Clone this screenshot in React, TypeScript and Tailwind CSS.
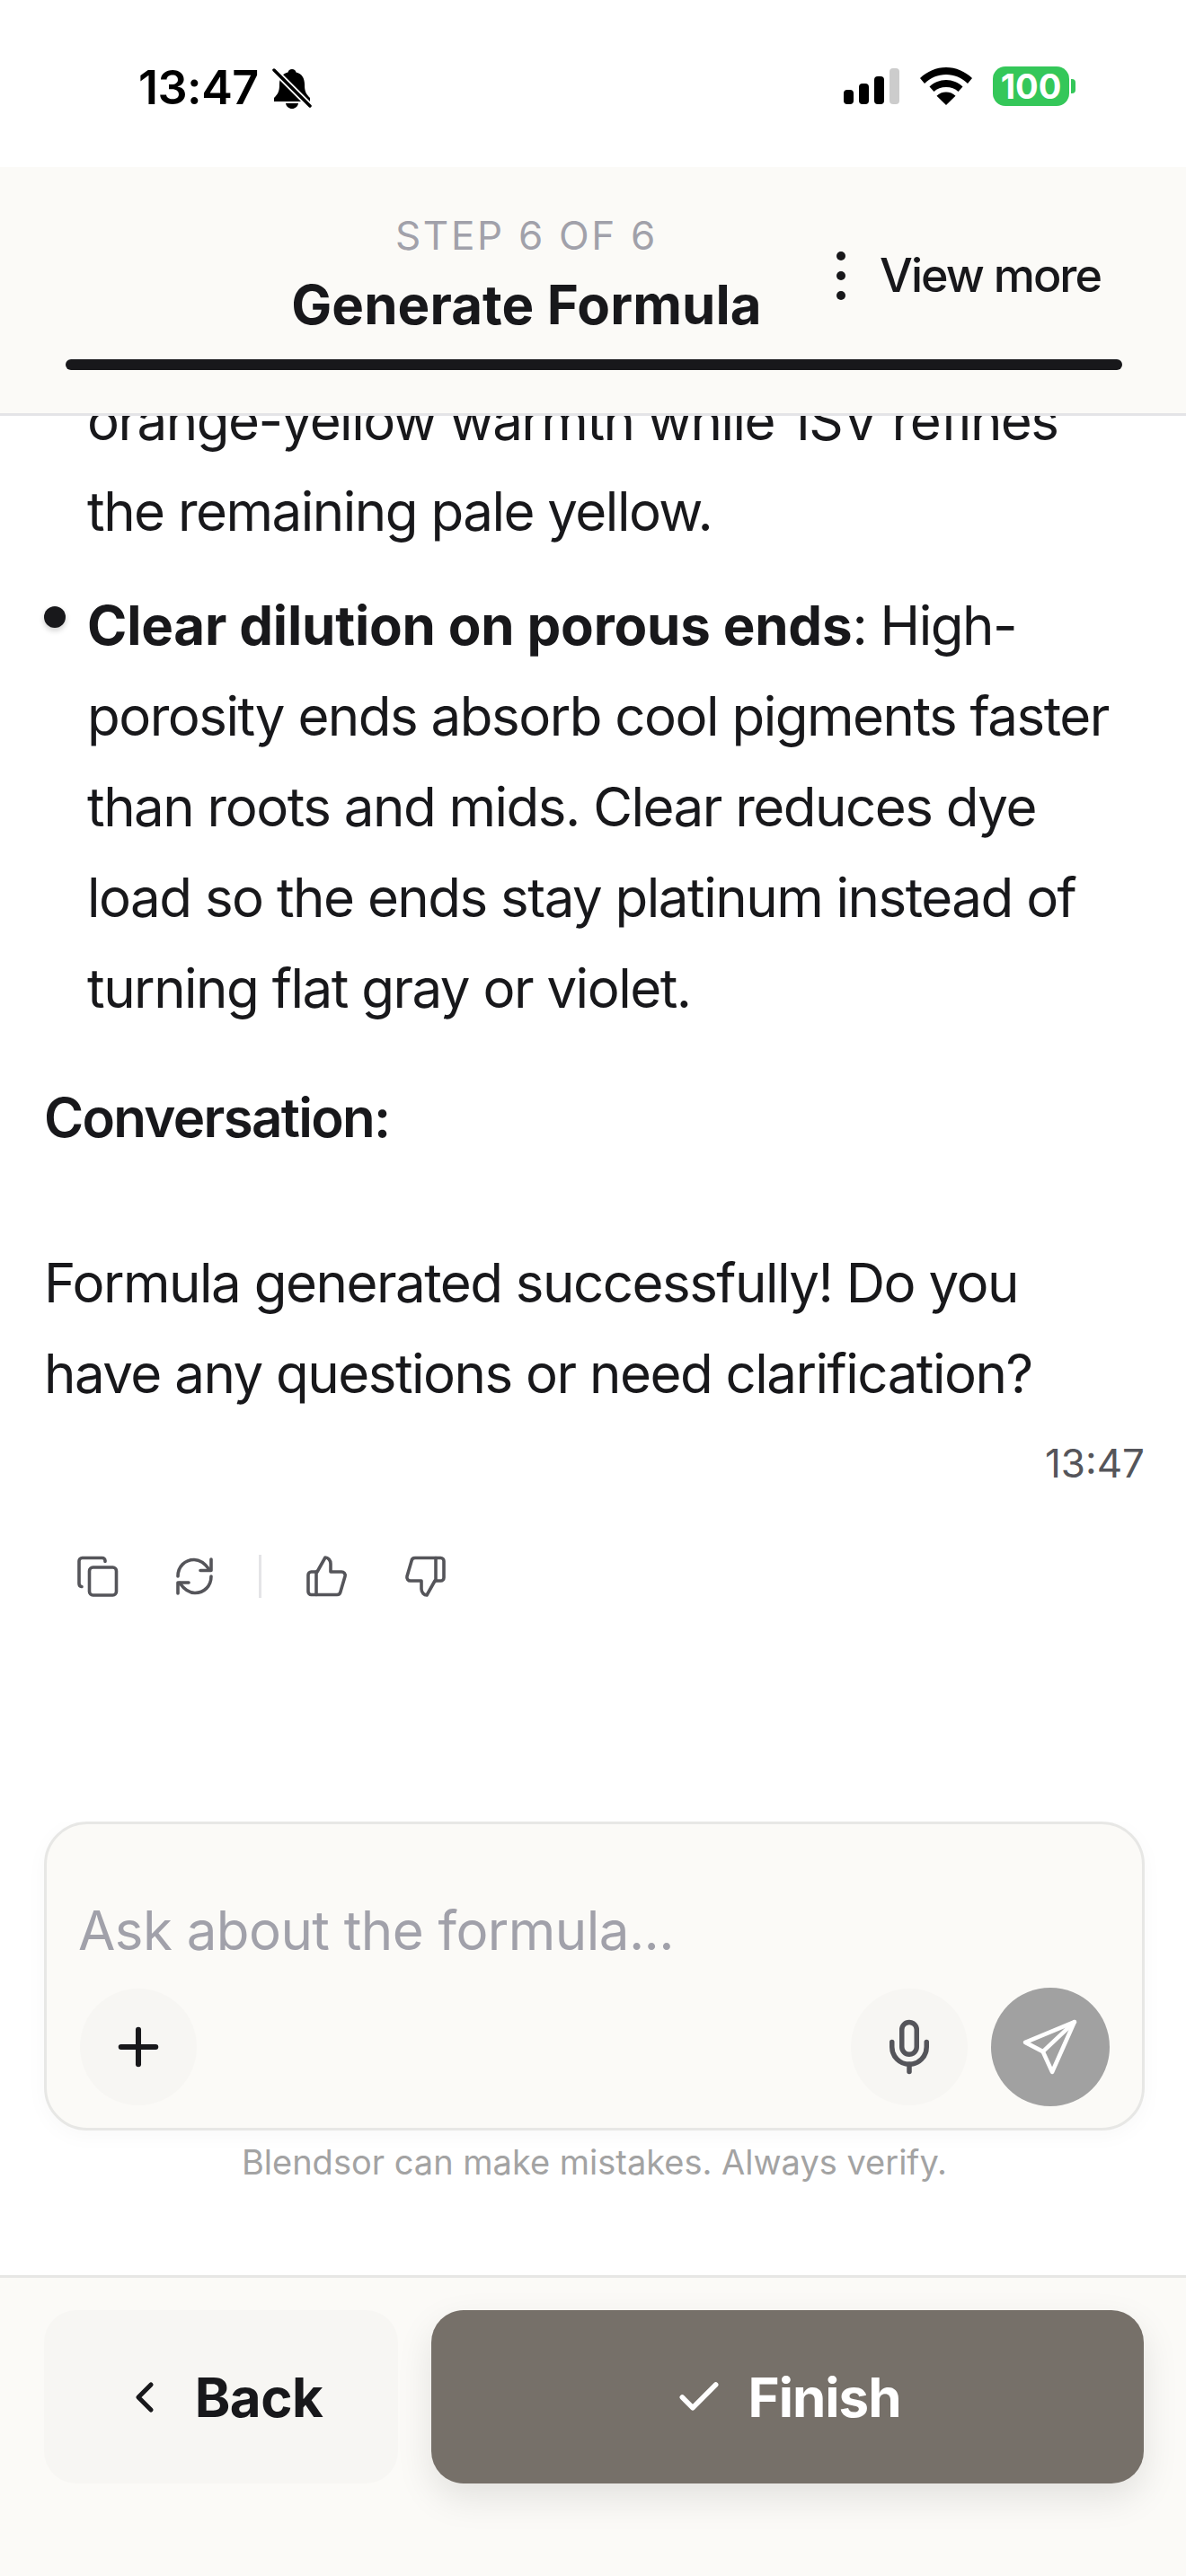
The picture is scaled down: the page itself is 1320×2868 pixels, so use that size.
import React from "react";
import { Plus, Mic, ChevronLeft, Check } from "lucide-react";

const Ink = "text-[#18181b]";

function CopyIcon() {
  return (
    <svg width="46" height="46" viewBox="0 0 46 46" fill="none" stroke="#55555a" strokeWidth="3.6" strokeLinecap="round" strokeLinejoin="round">
      <path d="M31 6.500V5.500a3.500 3.500 0 0 0-3.500-3H5.500A3.500 3.500 0 0 0 2 6v25a3.500 3.500 0 0 0 3 3.500" />
      <rect x="13.500" y="13" width="30" height="31" rx="4" />
    </svg>
  );
}
function RefreshIcon() {
  return (
    <svg width="42" height="42" viewBox="0 0 42 42" fill="none" stroke="#55555a" strokeWidth="3.6" strokeLinecap="round" strokeLinejoin="round">
      <path d="M2 21C2 10 10 2.500 20 2.500c7 0 12 4 17 11" />
      <path d="M39 2v12.500H27" />
      <path d="M39 21c0 11-8 18.500-18 18.500-7 0-12-4-17-11" />
      <path d="M2 40V28h12" />
    </svg>
  );
}
function ThumbUp() {
  return (
    <svg width="46" height="46" viewBox="0 0 46 46" fill="none" stroke="#55555a" strokeWidth="3.6" strokeLinecap="round" strokeLinejoin="round">
      <path d="M11 18H5.500A3.500 3.500 0 0 0 2 21.500v18.500A3.500 3.500 0 0 0 5.500 43.500H34a4 4 0 0 0 4-3.500l5-17a4 4 0 0 0-4-5H27V9c0-4-3-7-6-7L12 18" />
      <path d="M11 18v25.500" />
    </svg>
  );
}
function ThumbDown() {
  return (
    <svg width="46" height="46" viewBox="0 0 46 46" fill="none" stroke="#55555a" strokeWidth="3.6" strokeLinecap="round" strokeLinejoin="round">
      <path d="M35 28h5.500a3.500 3.500 0 0 0 3.500-3.500V6a3.500 3.500 0 0 0-3.500-3.500H12a4 4 0 0 0-4 3.500L3 23a4 4 0 0 0 4 5h12v9c0 4 3 7 6 7l9-16" />
      <path d="M35 28V2.500" />
    </svg>
  );
}
function SendIcon() {
  return (
    <svg width="64" height="64" viewBox="0 0 62 62" fill="none" stroke="#ffffff" strokeWidth="4.5" strokeLinecap="round" strokeLinejoin="round">
      <path d="M57 4 4 26l19 10 10 22L57 4Z" />
      <path d="M23 36 57 4" />
    </svg>
  );
}
function MuteBell() {
  return (
    <svg width="44" height="46" viewBox="0 0 44 46" fill="none">
      <path d="M22 2c2.500 0 4 1.500 4.500 3.500C33 7 36 12 36 19c0 7 1 10 6 15v4H2v-4c5-5 6-8 6-15C8 12 11 7 17.500 5.500 18 3.500 19.500 2 22 2Z" fill="#000" />
      <path d="M15 40h14c-.5 3.500-3.500 6-7 6s-6.500-2.500-7-6Z" fill="#000" />
      <path d="M2 3l40 40" stroke="#fff" strokeWidth="7" />
      <path d="M2 3l40 40" stroke="#000" strokeWidth="3.500" strokeLinecap="round" />
    </svg>
  );
}
function WifiIcon() {
  return (
    <svg width="58" height="42" viewBox="0 0 58 42" fill="#000">
      <path d="M29 0c11 0 21 4.500 29 12l-5 6C46.500 11.500 38 8 29 8S11.500 11.500 5 18l-5-6C8 4.500 18 0 29 0Z" />
      <path d="M29 14c7 0 13.500 2.800 18.500 7.500l-5 5.500C39 23.700 34.500 22 29 22s-10 1.700-13.500 5l-5-5.500C15.500 16.800 22 14 29 14Z" />
      <path d="M29 27.500c4 0 7.800 1.500 10.500 4.200L29 42 18.500 31.700c2.700-2.700 6.500-4.200 10.500-4.200Z" />
    </svg>
  );
}

function StatusBar() {
  return (
    <div className="flex h-[186px] items-start justify-between bg-white pl-[154px] pr-[123px] pt-[70px]">
      <div className="flex items-center gap-[15px]">
        <span className="text-[52px] font-semibold leading-[56px] tracking-[-0.5px] text-black">13:47</span>
        <MuteBell />
      </div>
      <div className="flex items-center gap-[23px] pt-[4px]">
        <div className="flex items-end gap-[6px]">
          <div className="h-[16px] w-[11px] rounded-[4px] bg-black" />
          <div className="h-[23px] w-[11px] rounded-[4px] bg-black" />
          <div className="h-[31px] w-[11px] rounded-[4px] bg-black" />
          <div className="h-[40px] w-[11px] rounded-[4px] bg-[#cccccc]" />
        </div>
        <WifiIcon />
        <div className="flex items-center gap-[2px]">
          <div className="flex h-[44px] w-[85px] items-center justify-center rounded-[14px] bg-[#34c759] text-[38px] font-bold leading-none text-white">100</div>
          <div className="h-[16px] w-[5px] rounded-r-[4px] bg-[#34c759]" />
        </div>
      </div>
    </div>
  );
}

function Header() {
  return (
    <div className="flex h-[277px] flex-col border-b-[3px] border-[#e4e4e7] bg-[#fbfaf7] pl-[73px] pr-[71px] pt-[48px]">
      <div className="relative flex flex-col items-center pr-[150px]">
        <div className="text-[44px] leading-[56px] tracking-[2.7px] text-[#a1a1aa]">STEP 6 OF 6</div>
        <div className={`mt-[11px] text-[60px] font-bold leading-[76px] tracking-[0.1px] ${Ink}`}>Generate Formula</div>
        <div className="absolute right-[24px] top-[43px] flex items-center gap-[38px]">
          <div className="flex flex-col gap-[12px]">
            <div className="h-[10px] w-[10px] rounded-full bg-[#18181b]" />
            <div className="h-[10px] w-[10px] rounded-full bg-[#18181b]" />
            <div className="h-[10px] w-[10px] rounded-full bg-[#18181b]" />
          </div>
          <span className={`text-[52px] font-medium leading-[60px] tracking-[-2px] ${Ink}`}>View more</span>
        </div>
      </div>
      <div className="mt-[23px] h-[12px] rounded-full bg-[#18181b]" />
    </div>
  );
}

function Main() {
  return (
    <div className={`relative min-h-0 flex-1 overflow-hidden whitespace-nowrap bg-white pl-[49px] pr-[46px] text-[60px] leading-[101px] tracking-[-1.5px] ${Ink}`}>
      <div className="-mt-[45px] pl-[48px]">
        <p>orange-yellow warmth while 1SV refines</p>
        <p>the remaining pale yellow.</p>
      </div>
      <div className="relative mt-[26px] pl-[48px]">
        <div className="absolute left-0 top-[29px] h-[24px] w-[24px] rounded-full bg-[#18181b] shadow-[0_3px_6px_rgba(0,0,0,0.2)]" />
        <p><span className="font-bold tracking-[-0.2px]">Clear dilution on porous ends</span>: High-</p>
        <p>porosity ends absorb cool pigments faster</p>
        <p>than roots and mids. Clear reduces dye</p>
        <p>load so the ends stay platinum instead of</p>
        <p>turning flat gray or violet.</p>
      </div>
      <p className="mt-[43px] font-semibold tracking-[-1.7px]">Conversation:</p>
      <div className="mt-[83px]">
        <p>Formula generated successfully! Do you</p>
        <p>have any questions or need clarification?</p>
      </div>
      <div className="mt-[19px] text-right text-[44px] leading-[60px] tracking-normal text-[#55555a]">13:47</div>
      <div className="mt-[72px] flex items-center pl-[37px]">
        <CopyIcon />
        <div className="ml-[64px]"><RefreshIcon /></div>
        <div className="ml-[50px] h-[48px] w-[3px] bg-[#e4e4e7]" />
        <div className="ml-[50px]"><ThumbUp /></div>
        <div className="ml-[63px]"><ThumbDown /></div>
      </div>
    </div>
  );
}

function Composer() {
  return (
    <div className="bg-white pb-[101px] pl-[49px] pr-[46px]">
      <div className="flex h-[344px] flex-col rounded-[48px] border-[3px] border-[#e7e7e5] bg-[#fbfaf7] pb-[24px] pl-[37px] pr-[36px] pt-[80px] shadow-[0_6px_24px_rgba(0,0,0,0.03)]">
        <div className="-ml-[2px] text-[60px] leading-[76px] tracking-[-0.55px] text-[#a1a1aa]">Ask about the formula...</div>
        <div className="mt-auto flex items-center">
          <div className="flex h-[130px] w-[130px] items-center justify-center rounded-full bg-[#f7f6f3]">
            <Plus size={66} strokeWidth={2.2} color="#18181b" />
          </div>
          <div className="ml-auto flex h-[130px] w-[130px] items-center justify-center rounded-full bg-[#f7f6f3]">
            <Mic size={66} strokeWidth={2} color="#55555a" />
          </div>
          <div className="ml-[26px] flex h-[132px] w-[132px] items-center justify-center rounded-full bg-[#a1a1a1]">
            <SendIcon />
          </div>
        </div>
      </div>
      <div className="mt-[10px] text-center text-[38px] leading-[50px] tracking-[0px] text-[#a3a3a3]">Blendsor can make mistakes. Always verify.</div>
    </div>
  );
}

function Footer() {
  return (
    <div className="flex h-[335px] gap-[37px] border-t-[3px] border-[#e7e7e5] bg-[#fbfaf7] pl-[49px] pr-[47px] pt-[36px]">
      <div className="flex h-[193px] w-[394px] items-center justify-center gap-[28px] rounded-[36px] bg-[#f7f6f3]">
        <ChevronLeft size={56} strokeWidth={2.2} color="#18181b" />
        <span className={`text-[60px] font-bold tracking-[-0.5px] ${Ink}`}>Back</span>
      </div>
      <div className="flex h-[193px] flex-1 items-center justify-center gap-[26px] rounded-[36px] bg-[#767069] shadow-[0_16px_40px_rgba(0,0,0,0.1)]">
        <Check size={56} strokeWidth={2.4} color="#ffffff" />
        <span className="text-[60px] font-bold tracking-[-1px] text-white">Finish</span>
      </div>
    </div>
  );
}

export default function App() {
  return (
    <div className="flex h-[2868px] w-[1320px] flex-col overflow-hidden bg-white font-['Inter',sans-serif]">
      <StatusBar />
      <Header />
      <Main />
      <Composer />
      <Footer />
    </div>
  );
}
